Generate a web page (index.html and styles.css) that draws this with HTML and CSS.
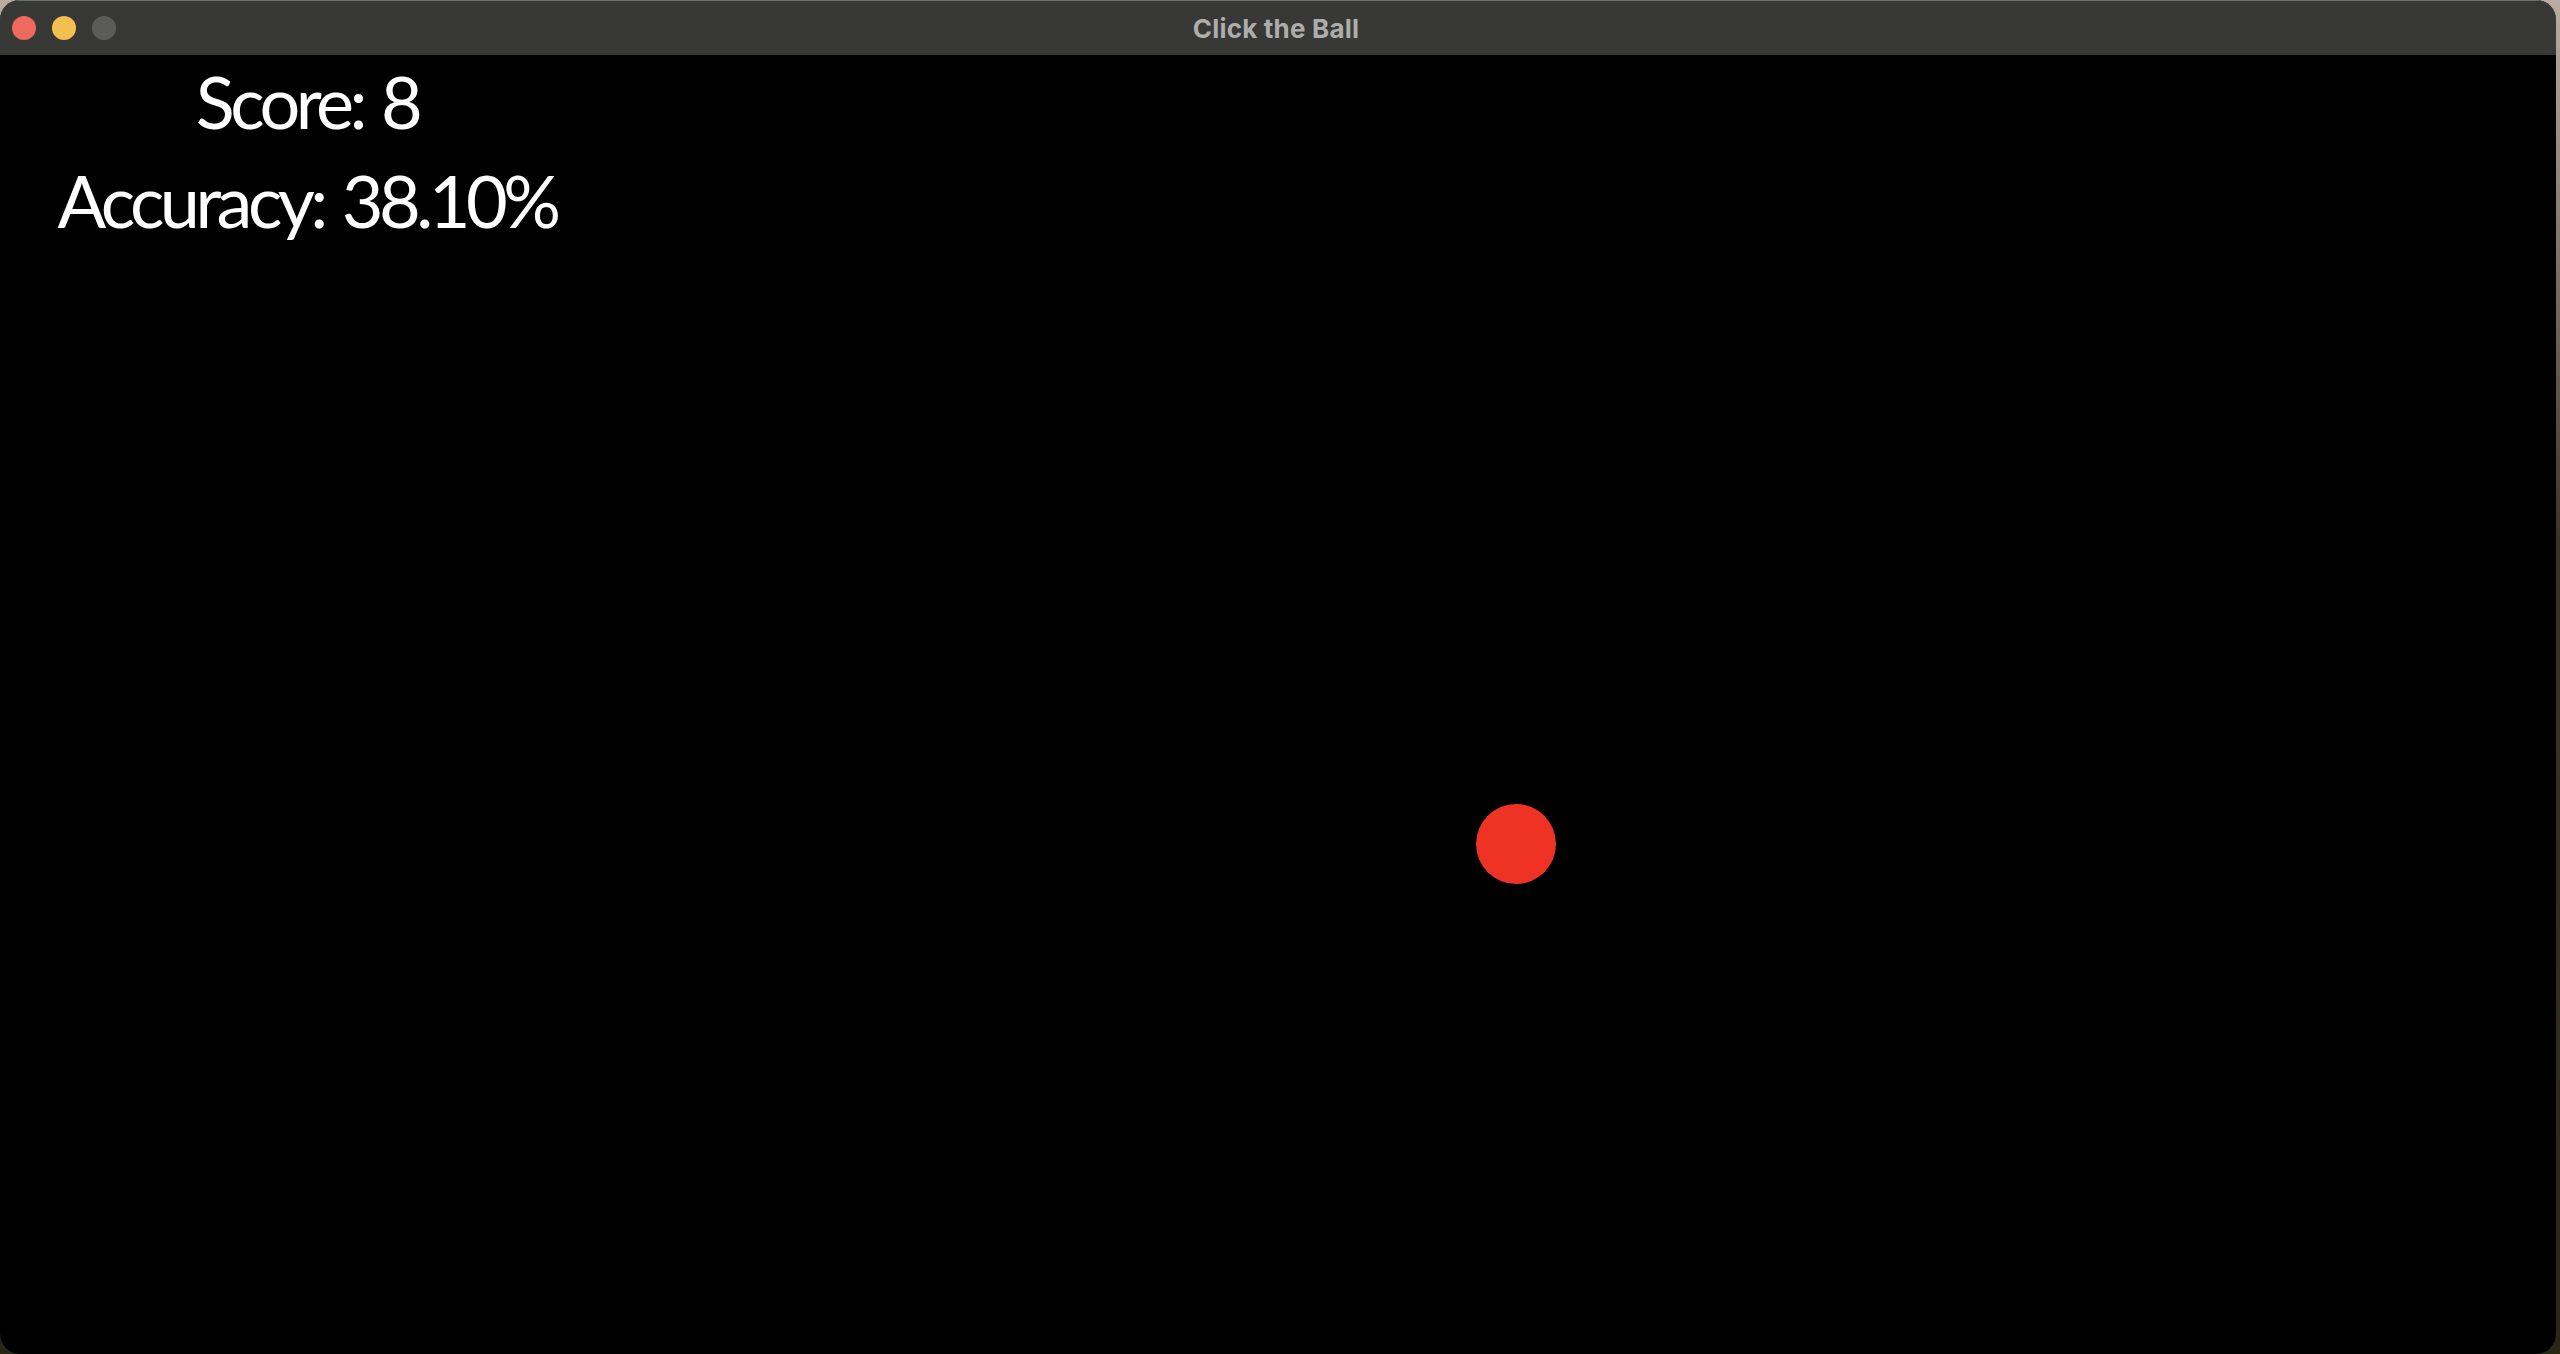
FILE: index.html
```html
<!DOCTYPE html>
<html>
<head>
<meta charset="utf-8">
<title>Click the Ball</title>
<link rel="stylesheet" href="styles.css">
</head>
<body>
<div class="window">
  <div class="titlebar">
    <div class="lights">
      <span class="light red"></span>
      <span class="light yellow"></span>
      <span class="light gray"></span>
    </div>
    <div class="title">Click the Ball</div>
  </div>
  <div class="canvas">
    <div class="hud">
      <div class="score">Score: 8</div>
      <div class="accuracy">Accuracy: 38.10%</div>
    </div>
    <div class="ball"></div>
  </div>
</div>
</body>
</html>
```

FILE: styles.css
```css
html, body {
  margin: 0;
  padding: 0;
  width: 2560px;
  height: 1354px;
  overflow: hidden;
}
body {
  background: linear-gradient(180deg, #b8ada0 0%, #3a3426 40%, #2a2616 100%);
  display: flex;
}
.window {
  width: 2556px;
  height: 1354px;
  display: flex;
  flex-direction: column;
  background: #000;
  border-radius: 20px;
  overflow: hidden;
  box-shadow: inset 0 0 0 1px #5a5a5a;
}
.titlebar {
  height: 54px;
  flex: 0 0 54px;
  background: #383836;
  border-top: 1px solid #6e6e6c;
  position: relative;
  display: flex;
  align-items: center;
  justify-content: center;
}
.lights {
  position: absolute;
  left: 12px;
  top: 15px;
  display: flex;
  gap: 16px;
}
.light {
  width: 24px;
  height: 24px;
  border-radius: 50%;
  display: block;
}
.red { background: #ee6a5f; }
.yellow { background: #f5bf4f; }
.gray { background: #5b5b59; }
.title {
  font-family: "Inter", "Liberation Sans", sans-serif;
  font-weight: 700;
  font-size: 26px;
  color: #adadab;
  letter-spacing: 0.2px;
  margin-left: -4px;
}
.canvas {
  flex: 1;
  position: relative;
  background: #000;
}
.hud {
  width: 614px;
  margin-top: -3px;
  text-align: center;
  color: #fff;
  font-family: "Comic Sans MS", "Lato", sans-serif;
  font-size: 72px;
  letter-spacing: -4.5px;
  word-spacing: 4px;
  line-height: 99px;
}
.score, .accuracy {
  white-space: nowrap;
}
.ball {
  position: absolute;
  left: 1476px;
  top: 749px;
  width: 80px;
  height: 80px;
  border-radius: 50%;
  background: #ee3324;
}
```
